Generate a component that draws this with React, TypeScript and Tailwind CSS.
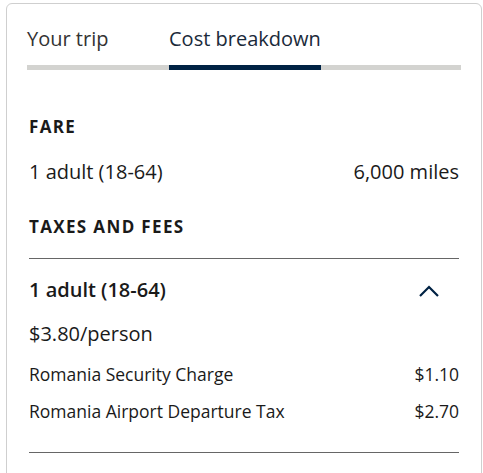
const fees = [
  { label: "Romania Security Charge", amount: "$1.10" },
  { label: "Romania Airport Departure Tax", amount: "$2.70" },
];

export default function App() {
  return (
    <div className="h-[473px] w-[483px] overflow-hidden bg-white pl-[6px] pt-[3px] font-['Open_Sans',sans-serif] text-[#1a1a1a]">
      <div className="h-[520px] w-[476px] rounded-t-[6px] border border-[#cfcfcf] px-[20px] pt-[21px]">
        <div className="flex text-[20px] leading-[28px]">
          <div className="w-[142px] border-b-[5px] border-[#d3d3d0] pb-[12px] text-[#333]">
            Your trip
          </div>
          <div className="w-[152px] border-b-[5px] border-[#002244] pb-[12px] text-[#1a2a3a]">
            Cost breakdown
          </div>
          <div className="flex-1 border-b-[5px] border-[#d3d3d0]" />
        </div>

        <div className="px-[2px]">
          <h3 className="mt-[45px] text-[17px] font-bold leading-[24px] tracking-[0.08em]">FARE</h3>
          <div className="mt-[19px] flex justify-between text-[20px] leading-[28px]">
            <span>1 adult (18-64)</span>
            <span>6,000 miles</span>
          </div>
          <h3 className="mt-[29px] text-[17px] font-bold leading-[24px] tracking-[0.08em]">
            TAXES AND FEES
          </h3>
          <div className="mt-[19px] border-t border-[#666]" />
          <div className="mt-[17px] flex items-center justify-between text-[20px] font-semibold leading-[28px]">
            <span>1 adult (18-64)</span>
            <svg width="22" height="13" viewBox="0 0 22 13" className="mr-[19px]" fill="none">
              <polyline points="2,12 11,3 20,12" stroke="#002244" strokeWidth="2.2" />
            </svg>
          </div>
          <div className="mt-[16px] text-[20px] leading-[28px]">$3.80/person</div>
          <div className="mt-[13px] flex flex-col gap-[11px] text-[17.5px] leading-[26px]">
            {fees.map((f) => (
              <div key={f.label} className="flex justify-between">
                <span>{f.label}</span>
                <span>{f.amount}</span>
              </div>
            ))}
          </div>
          <div className="mt-[28px] border-t border-[#666]" />
        </div>
      </div>
    </div>
  );
}
